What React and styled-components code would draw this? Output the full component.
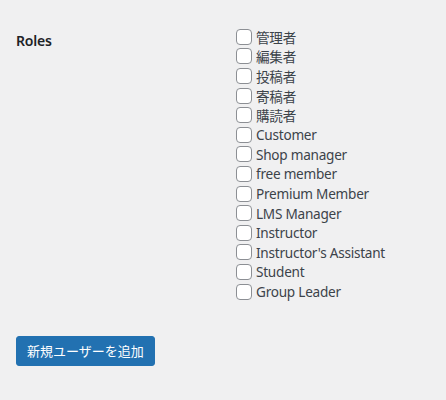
import React from 'react';
import styled, { createGlobalStyle } from 'styled-components';

const GlobalStyle = createGlobalStyle`
  html, body {
    margin: 0;
    padding: 0;
    background: #f0f0f1;
  }
  body {
    font-family: "Segoe UI", "Noto Sans", "Noto Sans CJK JP", sans-serif;
    color: #3c434a;
    font-size: 14px;
  }
`;

const Page = styled.div`
  padding: 12px 16px 0;
  width: 446px;
  height: 400px;
  box-sizing: border-box;
`;

const FieldRow = styled.div`
  display: flex;
  align-items: flex-start;
`;

const FieldLabel = styled.div`
  width: 200px;
  padding: 20px 10px 20px 0;
  font-weight: 600;
  font-size: 14px;
  line-height: 1.3;
  color: #1d2327;
  letter-spacing: -0.2px;
`;

const FieldBody = styled.fieldset`
  border: 0;
  margin: 0;
  padding: 15px 10px;
`;

const RoleLabel = styled.label`
  display: flex;
  align-items: center;
  height: 19.6px;
  font-size: 13.6px;
  letter-spacing: -0.25px;
  color: #3c434a;
  white-space: nowrap;
`;

const Box = styled.input.attrs({ type: 'checkbox' })`
  appearance: none;
  width: 16px;
  height: 16px;
  margin: 0 4px 0 0;
  border: 1px solid #8c8f94;
  border-radius: 4px;
  background: #fff;
  box-sizing: border-box;
  flex: none;
`;

const Submit = styled.div`
  margin-top: 20px;
`;

const PrimaryButton = styled.button`
  height: 30px;
  padding: 0 10px;
  border: 1px solid #2271b1;
  border-radius: 3px;
  background: #2271b1;
  color: #fff;
  font-family: "Segoe UI", "Noto Sans CJK JP", sans-serif;
  font-size: 13px;
  line-height: 2.15;
  cursor: pointer;
`;

const roles = [
  '管理者',
  '編集者',
  '投稿者',
  '寄稿者',
  '購読者',
  'Customer',
  'Shop manager',
  'free member',
  'Premium Member',
  'LMS Manager',
  'Instructor',
  "Instructor's Assistant",
  'Student',
  'Group Leader',
];

export default function App() {
  return (
    <Page>
      <GlobalStyle />
      <FieldRow>
        <FieldLabel>Roles</FieldLabel>
        <FieldBody>
          {roles.map((r) => (
            <RoleLabel key={r}>
              <Box />
              {r}
            </RoleLabel>
          ))}
        </FieldBody>
      </FieldRow>
      <Submit>
        <PrimaryButton>新規ユーザーを追加</PrimaryButton>
      </Submit>
    </Page>
  );
}
